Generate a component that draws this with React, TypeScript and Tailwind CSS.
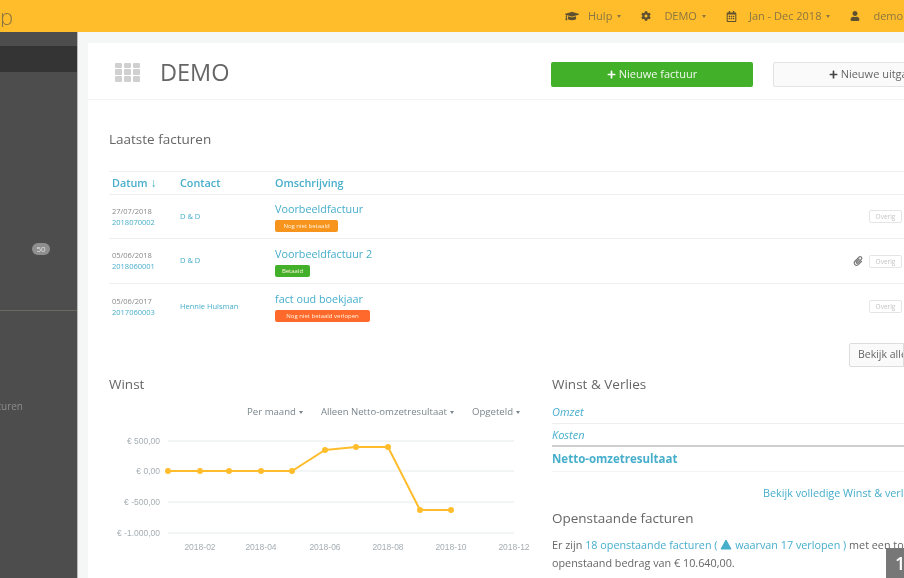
import { FaCog, FaGraduationCap, FaPaperclip, FaPlus, FaRegCalendarAlt, FaUser } from "react-icons/fa";

const Caret = ({ className = "ml-[5px]" }: { className?: string }) => (
  <span className={`inline-block shrink-0 border-x-[2.5px] border-t-[3px] border-x-transparent border-t-current ${className}`} />
);

const NavItem = ({ icon, label }: { icon: React.ReactNode; label: string }) => (
  <div className="flex shrink-0 items-center whitespace-nowrap">
    <span className="flex w-[23px] shrink-0 items-center text-[#5f5030]">{icon}</span>
    <span className="text-[11px] leading-4">{label}</span>
    <Caret />
  </div>
);

const rows = [
  {
    date: "27/07/2018",
    nr: "2018070002",
    contact: "D & D",
    title: "Voorbeeldfactuur",
    badge: "Nog niet betaald",
    badgeClass: "w-[63px] bg-[#f7941e]",
    rowClass: "h-[44px]",
    clip: false,
  },
  {
    date: "05/06/2018",
    nr: "2018060001",
    contact: "D & D",
    title: "Voorbeeldfactuur 2",
    badge: "Betaald",
    badgeClass: "w-[35px] bg-[#43b02a]",
    rowClass: "h-[45px]",
    clip: true,
  },
  {
    date: "05/06/2017",
    nr: "2017060003",
    contact: "Hennie Huisman",
    title: "fact oud boekjaar",
    badge: "Nog niet betaald verlopen",
    badgeClass: "w-[95px] bg-[#ff6a2c]",
    rowClass: "h-[45px]",
    clip: false,
  },
];

const Chart = () => {
  const points: [number, number][] = [
    [59, 51], [91, 51], [120, 51], [152, 51], [183, 51],
    [216, 30], [247, 27], [279, 27], [311, 90], [342, 90],
  ];
  return (
    <svg width="420" height="135" viewBox="0 0 420 135" className="block">
      {[21, 51, 82, 113].map((y) => (
        <line key={y} x1="59" x2="405" y1={y} y2={y} stroke="#e6ebed" />
      ))}
      {[
        ["€ 500,00", 24],
        ["€ 0,00", 54],
        ["€ -500,00", 85],
        ["€ -1.000,00", 116],
      ].map(([t, y]) => (
        <text key={t} x="51" y={y} textAnchor="end" fontSize="8.5" fill="#a5aeb3" fontFamily="Liberation Sans, sans-serif">
          {t}
        </text>
      ))}
      {[
        ["2018-02", 91],
        ["2018-04", 152],
        ["2018-06", 216],
        ["2018-08", 279],
        ["2018-10", 342],
        ["2018-12", 405],
      ].map(([t, x]) => (
        <text key={t} x={x} y="130" textAnchor="middle" fontSize="8.5" fill="#a5aeb3" fontFamily="Liberation Sans, sans-serif">
          {t}
        </text>
      ))}
      <polyline points={points.map((p) => p.join(",")).join(" ")} fill="none" stroke="#ffbd2e" strokeWidth="2" />
      {points.map(([x, y]) => (
        <circle key={x} cx={x} cy={y} r="3" fill="#ffbd2e" />
      ))}
    </svg>
  );
};

export default function App() {
  return (
    <div className="relative h-[578px] w-[904px] overflow-hidden bg-[#f5f7f7] font-['Open_Sans',sans-serif] text-[#666] blur-[0.5px]">
      <header className="flex h-[32px] items-center bg-[#ffbd2b] text-[#8a7640]">
        <div className="flex w-[13px] shrink-0 justify-end overflow-hidden text-[22px] leading-none font-light text-[#8a7440]">p</div>
        <div className="ml-[552px] flex shrink-0 items-center gap-[20px]">
          <NavItem icon={<FaGraduationCap size={14} />} label="Hulp" />
          <NavItem icon={<FaCog size={10} />} label="DEMO" />
          <NavItem icon={<FaRegCalendarAlt size={11} />} label="Jan - Dec 2018" />
          <NavItem icon={<FaUser size={10} />} label="demo" />
        </div>
      </header>

      <div className="flex h-[546px]">
        <aside className="h-full w-[78px] shrink-0 border-r border-[#bbb] bg-[#4d4d4d]">
          <div className="mt-[14px] h-[26px] bg-[#343434]" />
          <div className="mt-[171px] mr-[27px] ml-[32px] h-[12px] rounded-full bg-[#8f8f8f] text-center text-[8px] leading-[12px] text-[#e2e2e2]">50</div>
          <div className="mt-[55px] h-px bg-[#6b6862]" />
          <div className="mt-[88px] flex w-[23px] justify-end overflow-hidden text-[10px] leading-[14px] whitespace-nowrap text-[#8d8d8d]">Facturen</div>
        </aside>

        <main className="mt-[11px] ml-[10px] w-[816px] shrink-0 bg-white">
          <div className="flex h-[57px] items-center border-b border-[#f2f4f4] pt-[6px] pl-[27px]">
            <div className="-mt-[4px] grid h-[19px] w-[25px] shrink-0 grid-cols-3 gap-[1.5px]">
              {Array.from({ length: 9 }).map((_, i) => (
                <span key={i} className="rounded-[1px] bg-[#d0d0d0]" />
              ))}
            </div>
            <h1 className="-mt-[4px] ml-[20px] w-[391px] shrink-0 text-[23.5px] leading-8 text-[#666]">DEMO</h1>
            <button className="flex h-[25px] w-[202px] shrink-0 items-center justify-center rounded-[2px] bg-[#43b02a] text-[11px] text-[#f0f8ee]">
              <FaPlus size={9} className="mr-[3px] text-white" />
              Nieuwe factuur
            </button>
            <button className="ml-[20px] flex h-[25px] w-[202px] shrink-0 items-center justify-center rounded-[2px] border border-[#e3e3e3] bg-[#fafafa] text-[11px] text-[#666]">
              <FaPlus size={9} className="mr-[3px] text-[#444]" />
              Nieuwe uitgave
            </button>
          </div>

          <div className="pl-[21px]">
            <h2 className="mt-[29px] text-[13.5px] leading-5">Laatste facturen</h2>

            <div className="mt-[22px] w-[795px] text-[#47aecb]">
              <div className="flex h-[24px] items-center border-y border-[#eef0f0] pl-[3px] text-[10.8px] font-semibold">
                <span className="w-[68px]">Datum <span className="text-[12px] font-normal">↓</span></span>
                <span className="w-[95px]">Contact</span>
                <span>Omschrijving</span>
              </div>
              {rows.map((r) => (
                <div key={r.nr} className={`flex items-center border-b border-[#eef0f0] pl-[3px] last:border-b-0 ${r.rowClass}`}>
                  <div className="w-[68px] text-[7.5px] leading-[11px]">
                    <div className="text-[#888]">{r.date}</div>
                    <div>{r.nr}</div>
                  </div>
                  <div className="w-[95px] text-[7.5px]">{r.contact}</div>
                  <div className="flex-1">
                    <div className="text-[10.8px] leading-[15px]">{r.title}</div>
                    <div className={`mt-[4px] h-[12px] rounded-[2px] text-center text-[6px] leading-[12px] whitespace-nowrap text-[#fff3dc] ${r.badgeClass}`}>{r.badge}</div>
                  </div>
                  {r.clip && <FaPaperclip size={10} className="mr-[6px] text-[#777]" />}
                  <div className="mr-[2px] h-[13px] w-[33px] rounded-[2px] border border-[#e5e5e5] text-center text-[6.5px] leading-[11px] text-[#c4c4c4]">Overig</div>
                </div>
              ))}
            </div>

            <div className="mt-[14px] flex justify-end">
              <button className="h-[24px] w-[55px] overflow-hidden rounded-l-[2px] border border-[#ddd] bg-[#fafafa] pl-[8px] text-left text-[10.5px] whitespace-nowrap text-[#666]">Bekijk alle</button>
            </div>

            <div className="mt-[7px] flex">
              <section className="w-[443px] shrink-0">
                <h2 className="text-[13.5px] leading-5">Winst</h2>
                <div className="mt-[10px] flex justify-end gap-[18px] pr-[32px] text-[9.6px] leading-4 text-[#7a868c]">
                  <span className="flex items-center">Per maand<Caret className="ml-[3px]" /></span>
                  <span className="flex items-center">Alleen Netto-omzetresultaat<Caret className="ml-[3px]" /></span>
                  <span className="flex items-center">Opgeteld<Caret className="ml-[3px]" /></span>
                </div>
                <Chart />
              </section>

              <section className="flex-1">
                <h2 className="text-[13.5px] leading-5">Winst &amp; Verlies</h2>
                <div className="mt-[8px] h-[22px] border-b border-[#eef0f0] text-[11px] leading-[20px] text-[#47aecb] italic">Omzet</div>
                <div className="h-[23px] border-b-2 border-[#cfcfcf] text-[11px] leading-[22px] text-[#47aecb] italic">Kosten</div>
                <div className="h-[25px] border-b border-[#f2f4f4] text-[11.5px] leading-[24px] font-bold text-[#47aecb]">Netto-omzetresultaat</div>
                <div className="mt-[13px] pl-[211px] text-[10.8px] leading-4 whitespace-nowrap text-[#47aecb]">Bekijk volledige Winst &amp; verlies</div>
                <h2 className="mt-[7px] text-[13.5px] leading-5">Openstaande facturen</h2>
                <p className="mt-[8px] text-[10.8px] leading-[17.5px] whitespace-nowrap">
                  Er zijn <span className="text-[#47aecb]">18 openstaande facturen ( <svg width="12" height="11" viewBox="0 0 12 11" className="inline align-[-1px]"><path d="M6 1 L11 10 H1 Z" fill="currentColor" stroke="currentColor" strokeLinejoin="round" /></svg> waarvan 17 verlopen )</span> met een totaal
                  <br />
                  openstaand bedrag van € 10.640,00.
                </p>
              </section>
            </div>
          </div>
        </main>
      </div>

      <div className="absolute right-0 bottom-0 flex h-[30px] w-[18px] items-center overflow-hidden bg-[#777] pl-[9px] text-[18px] font-semibold text-white">1</div>
    </div>
  );
}
